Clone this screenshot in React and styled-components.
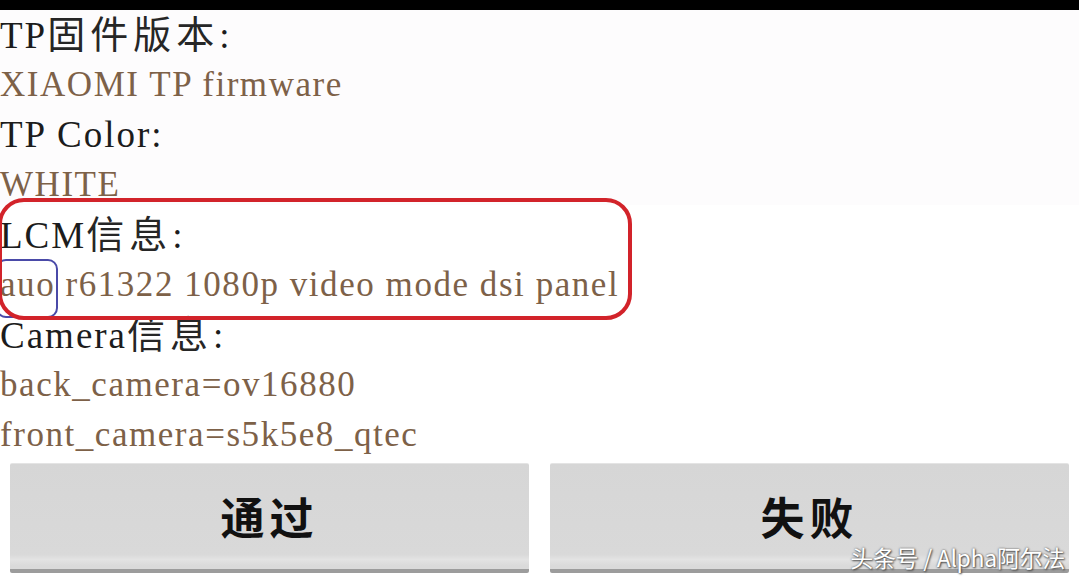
import styled, { createGlobalStyle } from "styled-components";

const GlobalStyle = createGlobalStyle`
   html, body {
      margin: 0;
      padding: 0;
      background: #ffffff;
   }
`

const Screen = styled.div`
   width: 1079px;
   height: 584px;
   overflow: hidden;
   position: relative;
   background: #ffffff;
   font-family: "Liberation Serif", "Noto Sans CJK SC", serif;
`

const StatusBar = styled.div`
   height: 10px;
   background: #000000;
`

const InfoList = styled.div`
   display: flex;
   flex-direction: column;
   background: linear-gradient(#fdfcfd 0, #fdfcfd 195px, #ffffff 195px);
`

const Row = styled.div`
   height: 50px;
   line-height: 50px;
   white-space: nowrap;
   color: ${props => props.value ? "#7d6148" : "#1c1c1c"};
   font-size: ${props => props.value ? "35px" : "37px"};
   letter-spacing: ${props => props.value ? "1.55px" : "2px"};
`

const Cjk = styled.span`
   font-size: 38px;
   font-weight: 400;
   letter-spacing: 5px;
   color: #262626;
`

const Highlight = styled.div`
   position: relative;
   width: 620px;

   &:after {
      content: "";
      position: absolute;
      left: -2px;
      right: -12px;
      top: -12px;
      bottom: -10px;
      border: 4px solid #d2232a;
      border-radius: 26px;
      pointer-events: none;
   }
`

const Mark = styled.span`
   position: relative;

   &:after {
      content: "";
      position: absolute;
      left: -4px;
      right: -3px;
      top: -6px;
      bottom: -14px;
      border: 2.5px solid #4a4aa8;
      border-radius: 10px;
   }
`

const ButtonBar = styled.div`
   display: grid;
   grid-template-columns: 1fr 1fr;
   gap: 21px;
   padding: 3px 10px 0 10px;
`

const Button = styled.div`
   box-sizing: border-box;
   height: 110px;
   display: flex;
   align-items: center;
   justify-content: center;
   background: linear-gradient(#d6d6d6 0, #d9d9d9 86%, #e3e3e3 91%, #dadada 97%);
   border-bottom: 4px solid #9c9c9c;
   border-top: 1px solid #e4e4e4;
   border-radius: 2px;
   font-family: "Noto Sans CJK SC", sans-serif;
   font-size: 44px;
   font-weight: 600;
   letter-spacing: 5px;
   color: #111111;
   padding-bottom: 2px;
`

const Watermark = styled.div`
   position: absolute;
   right: 14px;
   bottom: 10px;
   font-family: "Noto Sans CJK SC", sans-serif;
   font-size: 23px;
   color: #ffffff;
   text-shadow: 0 0 2px #555, 1px 1px 2px #444;
   letter-spacing: -0.3px;
`

export default function App() {
   return (
      <Screen>
         <GlobalStyle />
         <StatusBar />
         <InfoList>
            <Row>TP<Cjk>固件版本</Cjk>:</Row>
            <Row value>XIAOMI TP firmware</Row>
            <Row>TP Color:</Row>
            <Row value>WHITE</Row>
            <Highlight>
               <Row>LCM<Cjk>信息</Cjk>:</Row>
               <Row value><Mark>auo</Mark> r61322 1080p video mode dsi panel</Row>
            </Highlight>
            <Row>Camera<Cjk>信息</Cjk>:</Row>
            <Row value>back_camera=ov16880</Row>
            <Row value>front_camera=s5k5e8_qtec</Row>
         </InfoList>
         <ButtonBar>
            <Button>通过</Button>
            <Button>失败</Button>
         </ButtonBar>
         <Watermark>头条号 / Alpha阿尔法</Watermark>
      </Screen>
   );
}
